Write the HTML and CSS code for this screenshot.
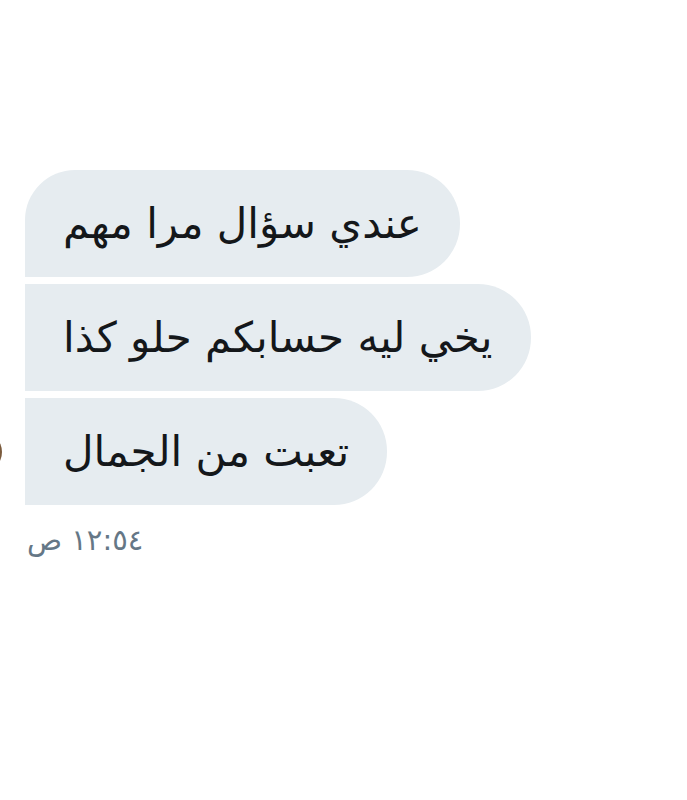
FILE: index.html
```html
<!DOCTYPE html>
<html lang="ar">
  <head>
    <meta charset="UTF-8" />
    <title>الرسائل</title>
    <link rel="stylesheet" href="styles.css">
  </head>
  <body>
    <div class="thread">
      <div class="group">
        <div class="avatar"></div>
        <div class="bubbles">
          <div class="bubble first" dir="rtl">عندي سؤال مرا مهم</div>
          <div class="bubble" dir="rtl">يخي ليه حسابكم حلو كذا</div>
          <div class="bubble last" dir="rtl">تعبت من الجمال</div>
        </div>
      </div>
      <div class="time" dir="rtl">١٢:٥٤ ص</div>
    </div>
  </body>
</html>
```

FILE: styles.css
```css
body {
  font-family: "DejaVu Sans", sans-serif;
  background-color: #ffffff;
  margin: 0;
  padding: 0;
}
.thread {
  padding-top: 170px;
  padding-left: 25px;
}
.group {
  display: flex;
  align-items: flex-end;
}
.avatar {
  width: 40px;
  height: 40px;
  border-radius: 50%;
  background: #7a5a3c;
  margin-left: -63px;
  margin-right: 23px;
  margin-bottom: 33px;
  flex-shrink: 0;
}
.bubbles {
  display: flex;
  flex-direction: column;
  align-items: flex-start;
  gap: 7px;
}
.bubble {
  background-color: #e6ecf0;
  color: #14171a;
  font-size: 42px;
  height: 107px;
  line-height: 107px;
  padding: 0 38px;
  border-radius: 0 53px 53px 0;
  white-space: nowrap;
}
.bubble.first {
  border-top-left-radius: 50px;
}
.time {
  display: inline-block;
  margin-top: 18px;
  margin-left: 2px;
  font-size: 29px;
  color: #657786;
}
```
